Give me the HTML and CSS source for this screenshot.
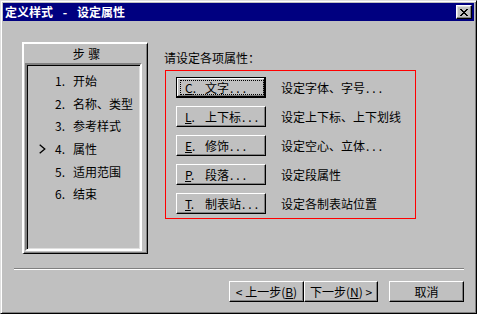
FILE: index.html
```html
<!DOCTYPE html>
<html lang="zh-CN">
<head>
<meta charset="utf-8">
<title>定义样式 - 设定属性</title>
<link rel="stylesheet" href="styles.css">
</head>
<body>
<div class="window">
  <div class="titlebar">
    <span class="title">定义样式 - 设定属性</span>
    <span class="close">
      <svg width="8" height="7" viewBox="0 0 8 7" shape-rendering="crispEdges">
        <rect x="0" y="0" width="2" height="1"/><rect x="6" y="0" width="2" height="1"/>
        <rect x="1" y="1" width="2" height="1"/><rect x="5" y="1" width="2" height="1"/>
        <rect x="2" y="2" width="4" height="1"/>
        <rect x="3" y="3" width="2" height="1"/>
        <rect x="2" y="4" width="4" height="1"/>
        <rect x="1" y="5" width="2" height="1"/><rect x="5" y="5" width="2" height="1"/>
        <rect x="0" y="6" width="2" height="1"/><rect x="6" y="6" width="2" height="1"/>
      </svg>
    </span>
  </div>

  <div class="main">
    <div class="steps">
      <div class="steps-head">步 骤</div>
      <div class="steps-list">
        <div class="step"><span class="mark"></span><span class="num">1.</span>开始</div>
        <div class="step"><span class="mark"></span><span class="num">2.</span>名称、类型</div>
        <div class="step"><span class="mark"></span><span class="num">3.</span>参考样式</div>
        <div class="step"><span class="mark"><svg width="7" height="10" viewBox="0 0 7 10"><polyline points="0.7,0.7 5.8,5 0.7,9.3" fill="none" stroke="#000" stroke-width="1.3"/></svg></span><span class="num">4.</span>属性</div>
        <div class="step"><span class="mark"></span><span class="num">5.</span>适用范围</div>
        <div class="step"><span class="mark"></span><span class="num">6.</span>结束</div>
      </div>
    </div>

    <div class="props">
      <div class="props-head">请设定各项属性：</div>
      <div class="props-box">
        <div class="prop">
          <button class="btn default"><span class="lbl"><span class="key"><u>C</u>.</span>文字<span class="dots">...</span></span></button>
          <span class="desc">设定字体、字号<span class="dots">...</span></span>
        </div>
        <div class="prop">
          <button class="btn"><span class="lbl"><span class="key"><u>L</u>.</span>上下标<span class="dots">...</span></span></button>
          <span class="desc">设定上下标、上下划线</span>
        </div>
        <div class="prop">
          <button class="btn"><span class="lbl"><span class="key"><u>E</u>.</span>修饰<span class="dots">...</span></span></button>
          <span class="desc">设定空心、立体<span class="dots">...</span></span>
        </div>
        <div class="prop">
          <button class="btn"><span class="lbl"><span class="key"><u>P</u>.</span>段落<span class="dots">...</span></span></button>
          <span class="desc">设定段属性</span>
        </div>
        <div class="prop">
          <button class="btn"><span class="lbl"><span class="key"><u>T</u>.</span>制表站<span class="dots">...</span></span></button>
          <span class="desc">设定各制表站位置</span>
        </div>
      </div>
    </div>
  </div>

  <div class="sep"></div>

  <div class="footer">
    <button class="btn nav prev">&lt; 上一步(<u>B</u>)</button>
    <button class="btn nav next">下一步(<u>N</u>) &gt;</button>
    <button class="btn nav cancel">取消</button>
  </div>
</div>
</body>
</html>
```

FILE: styles.css
```css
* {
  box-sizing: border-box;
}

html, body {
  margin: 0;
  padding: 0;
}

body {
  background: #c0c0c0;
  color: #000;
  font-family: "Noto Sans CJK SC", "Liberation Sans", sans-serif;
  font-size: 12px;
  line-height: 1;
}

.window {
  width: 477px;
  height: 314px;
  background: #c0c0c0;
  border: 1px solid;
  border-color: #dfdfdf #000 #000 #dfdfdf;
  box-shadow: inset 1px 1px #fff, inset -1px -1px #808080;
  padding: 2px;
}

/* title bar */
.titlebar {
  height: 18px;
  background: #000080;
  color: #fff;
  display: flex;
  align-items: center;
  justify-content: space-between;
  padding: 0 2px;
}

.title {
  font-weight: bold;
  font-size: 12px;
  word-spacing: 7px;
}

.close {
  width: 16px;
  height: 14px;
  background: #c0c0c0;
  border: 1px solid;
  border-color: #fff #000 #000 #fff;
  box-shadow: inset -1px -1px #808080, inset 1px 1px #dfdfdf;
  display: flex;
  align-items: center;
  justify-content: center;
  padding: 0 1px 0 0;
}

.close svg {
  display: block;
  fill: #000;
}

/* main area */
.main {
  display: flex;
  padding: 21px 0 0 19px;
}

.steps {
  width: 126px;
  height: 212px;
  border-top: 2px solid #fff;
  border-left: 2px solid #fff;
  border-right: 1px solid #000;
  border-bottom: 1px solid #000;
  box-shadow: inset -1px -1px #808080;
  display: flex;
  flex-direction: column;
}

.steps-head {
  height: 19px;
  display: flex;
  align-items: center;
  justify-content: center;
  padding-left: 2px;
  word-spacing: 1px;
}

.steps-list {
  margin-left: 1px;
  width: 117px;
  height: 188px;
  border: 2px solid;
  border-color: #808080 #fff #fff #808080;
  box-shadow: inset 1px 1px #000, inset -1px -1px #dfdfdf;
  padding: 5px 0 0 12px;
}

.step {
  height: 22.6px;
  display: flex;
  align-items: center;
}

.mark {
  width: 16px;
  display: flex;
  align-items: center;
}

.mark svg {
  display: block;
}

.num {
  width: 18px;
}

/* properties */
.props {
  margin-left: 16px;
  padding-top: 9px;
}

.props-head {
  height: 14px;
  line-height: 14px;
}

.props-box {
  margin: 5px 0 0 1px;
  width: 251px;
  height: 149px;
  border: 1px solid #f00;
  padding: 6px 0 0 10px;
  display: flex;
  flex-direction: column;
  gap: 8px;
}

.prop {
  display: flex;
  align-items: center;
  height: 21px;
}

.btn {
  margin: 0;
  width: 90px;
  height: 21px;
  background: #c0c0c0;
  color: #000;
  font: inherit;
  border: 1px solid;
  border-color: #fff #000 #000 #fff;
  box-shadow: inset -1px -1px #808080;
  padding: 2px 1px 2px 3px;
  text-align: left;
  display: flex;
  align-items: stretch;
}

.btn.default {
  border-color: #000;
  box-shadow: inset -1px -1px #000, inset 1px 1px #fff, inset -2px -2px #808080;
  padding: 2px 1px 2px 3px;
}

.lbl {
  flex: 1;
  display: flex;
  align-items: center;
  border: 1px dotted transparent;
  padding-left: 4px;
  white-space: nowrap;
}

.btn.default .lbl {
  border-color: #000;
}

.key {
  display: inline-block;
  width: 20px;
}

.dots {
  letter-spacing: 3px;
  margin-left: 1px;
}

.desc {
  margin-left: 15px;
  white-space: nowrap;
}

/* separator & footer */
.sep {
  margin: 14px 0 0 11px;
  width: 450px;
  height: 2px;
  border-top: 1px solid #808080;
  border-bottom: 1px solid #fff;
}

.footer {
  margin-top: 11px;
  display: flex;
  justify-content: flex-end;
  padding-right: 10px;
}

.btn.nav {
  justify-content: center;
  align-items: center;
  padding: 0;
  white-space: nowrap;
}

.btn.prev {
  width: 75px;
}

.btn.next {
  width: 74px;
}

.btn.cancel {
  width: 75px;
  margin-left: 11px;
}
```
